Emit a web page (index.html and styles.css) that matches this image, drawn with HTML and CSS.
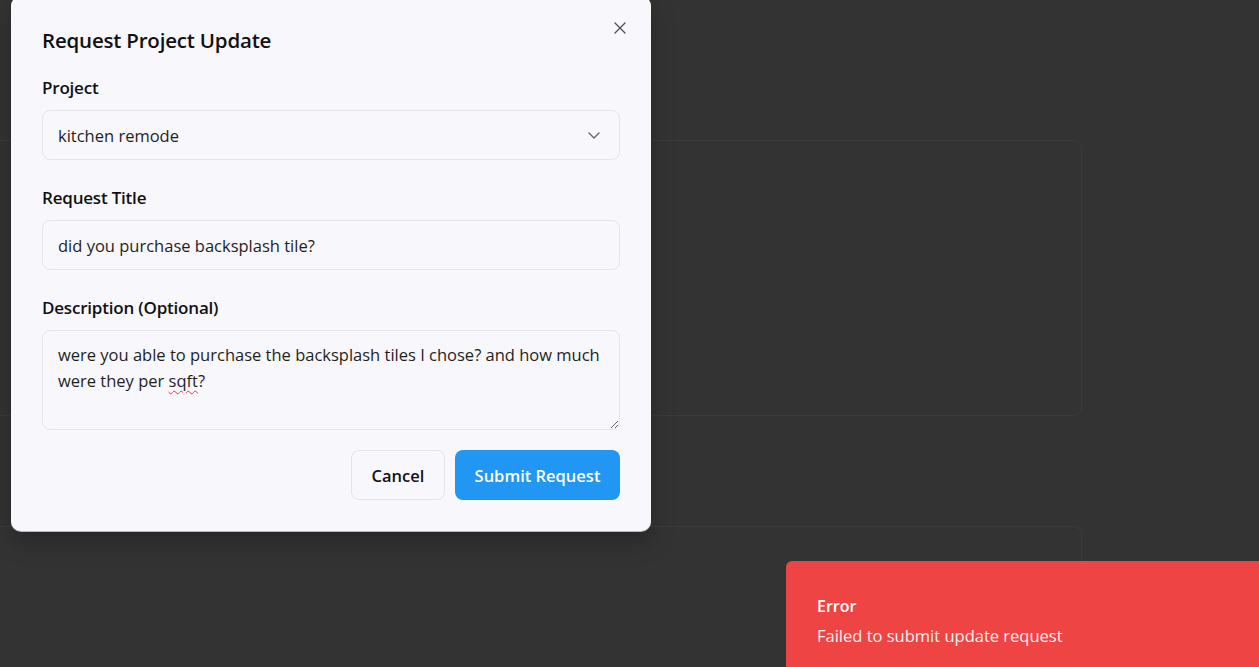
FILE: index.html
```html
<!DOCTYPE html>
<html lang="en">
<head>
<meta charset="utf-8">
<title>Request Project Update</title>
<link rel="stylesheet" href="styles.css">
</head>
<body>
  <main class="page">
    <div class="bg-card bg-card-1"></div>
    <div class="bg-card bg-card-2"></div>
  </main>

  <div class="dialog" role="dialog" aria-labelledby="dlg-title">
    <button class="close" aria-label="Close">
      <svg width="14" height="14" viewBox="0 0 14 14" fill="none" stroke="#555" stroke-width="1.4" stroke-linecap="round"><path d="M2 2L12 12M12 2L2 12"/></svg>
    </button>
    <h2 id="dlg-title" class="title">Request Project Update</h2>

    <div class="field">
      <label class="label">Project</label>
      <div class="control select">
        <span>kitchen remode</span>
        <svg width="14" height="14" viewBox="0 0 14 14" fill="none" stroke="#666" stroke-width="1.4" stroke-linecap="round" stroke-linejoin="round"><path d="M2 5L7 10L12 5"/></svg>
      </div>
    </div>

    <div class="field">
      <label class="label">Request Title</label>
      <div class="control">did you purchase backsplash tile?</div>
    </div>

    <div class="field">
      <label class="label">Description (Optional)</label>
      <div class="control textarea">were you able to purchase the backsplash tiles I chose? and how much were they per <span class="typo">sqft</span>?</div>
    </div>

    <div class="actions">
      <button class="btn btn-cancel">Cancel</button>
      <button class="btn btn-primary">Submit Request</button>
    </div>
  </div>

  <div class="toast" role="alert">
    <div class="toast-title">Error</div>
    <div class="toast-desc">Failed to submit update request</div>
  </div>
</body>
</html>
```

FILE: styles.css
```css
* { box-sizing: border-box; }

html, body {
  margin: 0;
  height: 100%;
}

body {
  background: #333333;
  font-family: "Open Sans", "Noto Sans", sans-serif;
  color: #1a1a1a;
  overflow: hidden;
  position: relative;
}

.page {
  height: 100%;
  position: relative;
}

.bg-card {
  position: absolute;
  left: -10px;
  width: 1092px;
  border: 1px solid #3b3b3b;
  border-radius: 8px;
}
.bg-card-1 { top: 140px; height: 276px; }
.bg-card-2 { top: 526px; bottom: 0; border-bottom: 0; border-radius: 8px 8px 0 0; }

.dialog {
  position: absolute;
  left: 11px;
  top: -4px;
  width: 640px;
  background: #f7f7fc;
  border-radius: 10px;
  padding: 28px 31px 31px 31px;
  box-shadow: 0 1px 0 #b8b8c4, 0 10px 25px rgba(0,0,0,0.25);
}

.close {
  position: absolute;
  right: 23px;
  top: 24px;
  width: 16px;
  height: 16px;
  padding: 0;
  border: 0;
  background: transparent;
  display: flex;
  align-items: center;
  justify-content: center;
}

.title {
  margin: 0 0 20px;
  font-size: 20.5px;
  line-height: 32px;
  font-weight: 600;
  color: #111;
  letter-spacing: -0.2px;
}

.field { display: flex; flex-direction: column; }
.field + .field { margin-top: 26px; }

.label {
  font-size: 17px;
  line-height: 24px;
  font-weight: 600;
  color: #111;
  margin-bottom: 10px;
  letter-spacing: -0.2px;
}

.control {
  height: 50px;
  border: 1px solid #e3e5ec;
  border-radius: 8px;
  background: #f7f7fc;
  padding: 0 15px;
  display: flex;
  align-items: center;
  font-size: 16.5px;
  color: #1f1f1f;
}

.select { justify-content: space-between; padding-right: 18px; }

.textarea {
  display: block;
  height: 100px;
  padding: 11px 15px;
  line-height: 26px;
  overflow: auto;
  resize: vertical;
}

.typo {
  text-decoration: underline wavy #e53935;
  text-decoration-thickness: 1.3px;
  text-underline-offset: 3px;
}

.actions {
  margin-top: 20px;
  display: flex;
  justify-content: flex-end;
  gap: 10px;
}

.btn {
  height: 50px;
  border-radius: 8px;
  font-family: inherit;
  font-size: 16.5px;
  font-weight: 600;
  padding: 0;
  cursor: pointer;
}

.btn-cancel {
  background: #f7f7fc;
  border: 1px solid #e3e5ec;
  color: #111;
  width: 94px;
}

.btn-primary {
  background: #2196f3;
  border: 0;
  color: #fff;
  width: 165px;
}

.toast {
  position: absolute;
  left: 786px;
  right: 0;
  top: 561px;
  bottom: 0;
  background: #ef4444;
  border-radius: 6px 0 0 0;
  padding: 34px 31px 0;
  color: #fff;
}

.toast-title {
  font-size: 16px;
  line-height: 22px;
  font-weight: 600;
}

.toast-desc {
  margin-top: 8px;
  font-size: 16.5px;
  line-height: 22px;
  opacity: 0.92;
}
```
